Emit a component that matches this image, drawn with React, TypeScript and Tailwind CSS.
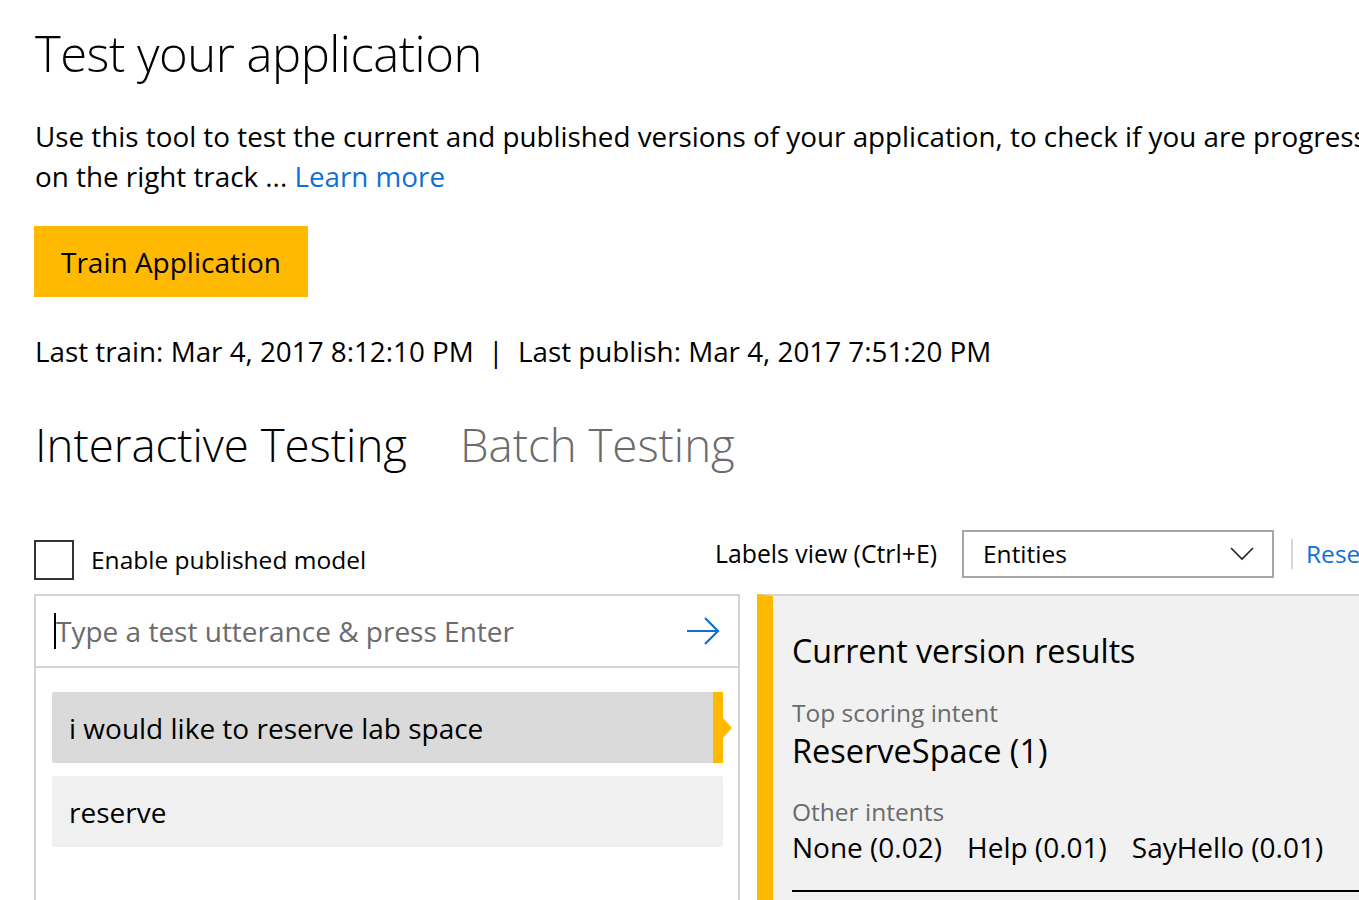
import { useState } from "react";

const intents = [
    { name: "None", score: "0.02" },
    { name: "Help", score: "0.01" },
    { name: "SayHello", score: "0.01" },
];

const utterances = ["i would like to reserve lab space", "reserve"];

function ArrowIcon() {
    return (
        <svg width="34" height="30" viewBox="0 0 34 30" fill="none" className="shrink-0">
            <path d="M1 15 H32 M19 2 L32 15 L19 28" stroke="#0f6fd8" strokeWidth="2.2" strokeLinejoin="miter" />
        </svg>
    );
}

function Chevron() {
    return (
        <svg width="24" height="14" viewBox="0 0 24 14" fill="none">
            <path d="M1 1 L12 12 L23 1" stroke="#222" strokeWidth="1.6" />
        </svg>
    );
}

export default function App() {
    const [selected] = useState(0);

    return (
        <div className="w-[1359px] h-[900px] overflow-hidden bg-white text-black" style={{ fontFamily: '"Open Sans", "Noto Sans", sans-serif' }}>
            <div className="w-[1750px] pl-[35px]">
                <h1 className="pt-[18px] text-[49px] leading-[70px] font-light tracking-[-0.5px]">Test your application</h1>

                <p className="mt-[28px] text-[27.8px] leading-[40px]">
                    Use this tool to test the current and published versions of your application, to check if you are progressing
                    <br />
                    on the right track ... <a className="text-[#0f6fd8]" href="#">Learn more</a>
                </p>

                <button className="mt-[30px] -ml-px h-[71px] w-[274px] bg-[#ffb900] text-[28px] text-black">Train Application</button>

                <p className="mt-[34px] text-[27.8px] leading-[40px]">
                    Last train: Mar 4, 2017 8:12:10 PM &nbsp;|&nbsp; Last publish: Mar 4, 2017 7:51:20 PM
                </p>

                {/* tabs */}
                <div className="mt-[43px] flex gap-[53px] text-[45.6px] leading-[60px] font-light">
                    <span>Interactive Testing</span>
                    <span className="text-[#6b6b6b]">Batch Testing</span>
                </div>

                {/* controls row */}
                <div className="mt-[55px] flex items-center h-[50px]">
                    <div className="w-[681px] flex items-center gap-[17px] -ml-px pt-[12px]">
                        <div className="w-[40px] h-[40px] border-2 border-[#333]" />
                        <span className="text-[24.5px]">Enable published model</span>
                    </div>
                    <span className="text-[24.8px]">Labels view (Ctrl+E)</span>
                    <div className="ml-[25px] w-[312px] h-[48px] border-2 border-[#a6a6a6] flex items-center justify-between pl-[19px] pr-[18px]">
                        <span className="text-[24.5px]">Entities</span>
                        <Chevron />
                    </div>
                    <div className="ml-[17px] w-[2px] h-[30px] bg-[#d6d6d6]" />
                    <span className="ml-[13px] text-[24.5px] text-[#0f6fd8]">Reset</span>
                </div>

                {/* panels */}
                <div className="mt-[15px] flex gap-[17px] -ml-px">
                    <div className="w-[706px] h-[320px] border-2 border-[#d4d4d4] border-b-0">
                        <div className="h-[72px] border-b-2 border-[#d4d4d4] flex items-center pl-[18px] pr-[18px]">
                            <div className="w-[2px] h-[36px] bg-black" />
                            <span className="flex-1 text-[28px] text-[#6b6b6b]">Type a test utterance &amp; press Enter</span>
                            <ArrowIcon />
                        </div>
                        <div className="pt-[24px] pl-[16px] pr-[15px] flex flex-col gap-[13px]">
                            {utterances.map((u, i) => (
                                <div
                                    key={u}
                                    className={
                                        i === selected
                                            ? "relative h-[71px] bg-[#dadada] rounded-l-[2px] flex items-center pl-[17px] text-[28px]"
                                            : "h-[71px] bg-[#f0f0f0] rounded-[3px] flex items-center pl-[17px] text-[28px]"
                                    }
                                >
                                    {u}
                                    {i === selected && (
                                        <div className="absolute right-0 top-0 h-full w-[10px] bg-[#ffb900]">
                                            <div className="absolute left-[10px] top-[26px] w-0 h-0 border-y-[10px] border-y-transparent border-l-[9px] border-l-[#ffb900]" />
                                        </div>
                                    )}
                                </div>
                            ))}
                        </div>
                    </div>

                    <div className="flex-1 h-[320px] bg-[#f1f1f1] border-l-[16px] border-l-[#ffb900] border-t-2 border-t-[#d4d4d4] pl-[19px]">
                        <div className="pt-[31px] text-[32.2px] leading-[48px]">Current version results</div>
                        <div className="mt-[23px] text-[24.5px] leading-[30px] text-[#6b6b6b]">Top scoring intent</div>
                        <div className="text-[32.5px] leading-[46px]">ReserveSpace (1)</div>
                        <div className="mt-[23px] text-[24.5px] leading-[30px] text-[#6b6b6b]">Other intents</div>
                        <div className="flex gap-[25px] text-[28px] leading-[40px]">
                            {intents.map((it) => (
                                <span key={it.name}>
                                    {it.name} ({it.score})
                                </span>
                            ))}
                        </div>
                        <div className="mt-[23px] h-[2px] bg-black" />
                    </div>
                </div>
            </div>
        </div>
    );
}
